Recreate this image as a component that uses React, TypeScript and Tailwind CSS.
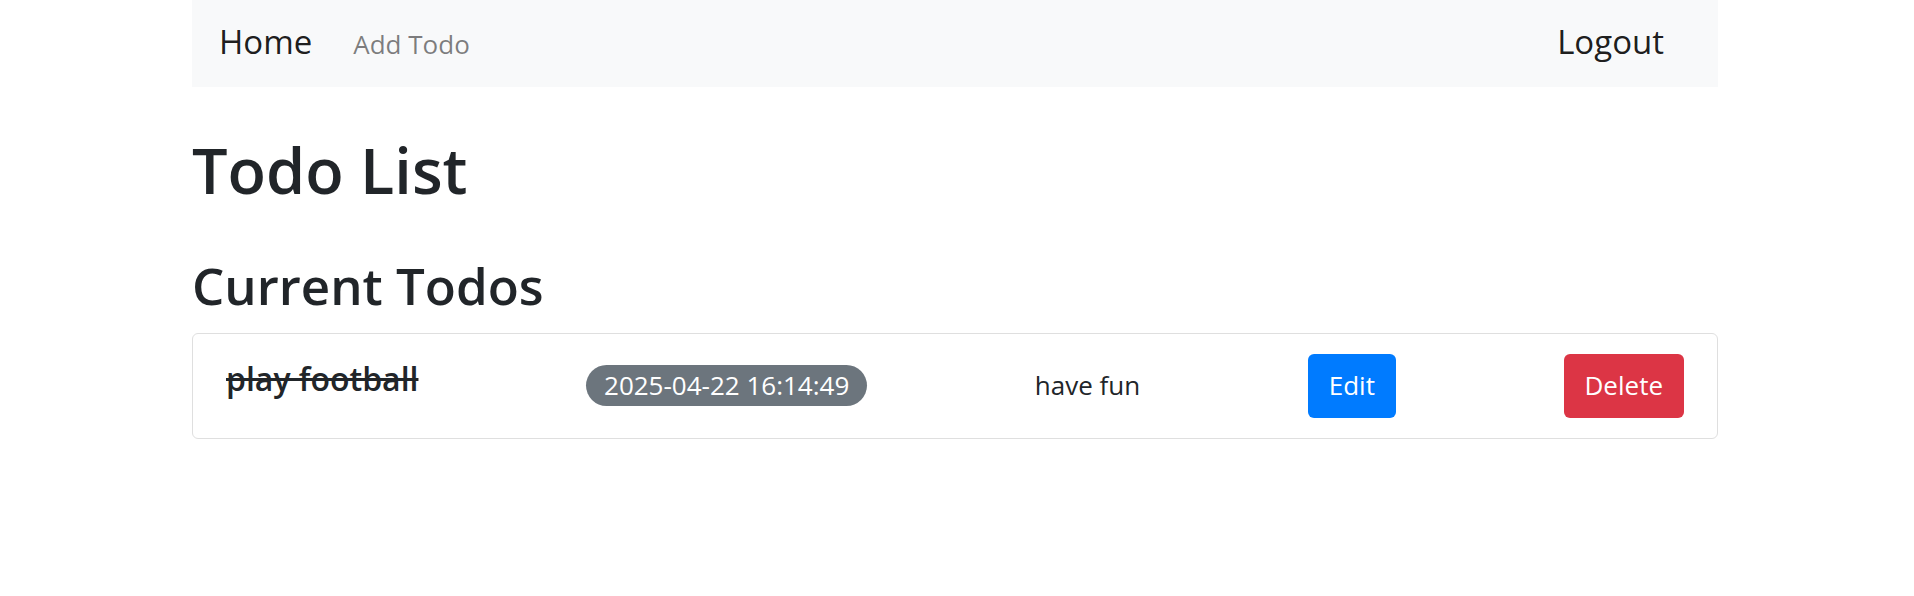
import React from 'react'

const todos = [
  {
    title: 'play football',
    createdAt: '2025-04-22 16:14:49',
    note: 'have fun',
    done: true,
  },
]

const App = () => {
  return (
    <div className="min-h-screen w-full bg-white text-[#212529] font-['Open_Sans','Noto_Sans',sans-serif]">
      {/* navbar */}
      <nav className="ml-[192px] w-[1526px] h-[87px] bg-[#f8f9fa] flex items-center px-[27px]">
        <a className="text-[33px] text-black/90 mr-[27px] leading-none pb-[4px]">Home</a>
        <a className="text-[26px] text-black/50 px-[14px] leading-none">Add Todo</a>
        <a className="ml-auto mr-[27px] text-[33px] text-black/90 leading-none pb-[4px]">Logout</a>
      </nav>

      <main className="ml-[192px] w-[1526px]">
        <h1 className="mt-[45px] text-[63px] font-semibold leading-[1.2]">Todo List</h1>
        <h2 className="mt-[47px] text-[51px] font-semibold leading-[1.2]">Current Todos</h2>

        <ul className="mt-[17px] border border-[#dfdfdf] rounded-[6px]">
          {todos.map((todo) => (
            <li
              key={todo.title}
              className="flex items-center justify-between px-[33px] py-[20px]"
            >
              <h5
                className={`text-[32px] font-semibold leading-[1.2] mb-[13px] ${
                  todo.done ? 'line-through' : ''
                }`}
              >
                {todo.title}
              </h5>
              <span className="bg-[#6c757d] text-white rounded-full px-[18px] h-[41px] flex items-center text-[26px]">
                {todo.createdAt}
              </span>
              <span className="text-[26px]">{todo.note}</span>
              <button className="bg-[#007bff] text-white text-[26px] rounded-[6px] px-[21px] h-[64px]">
                Edit
              </button>
              <button className="bg-[#dc3545] text-white text-[26px] rounded-[6px] px-[21px] h-[64px]">
                Delete
              </button>
            </li>
          ))}
        </ul>
      </main>
    </div>
  )
}

export default App
